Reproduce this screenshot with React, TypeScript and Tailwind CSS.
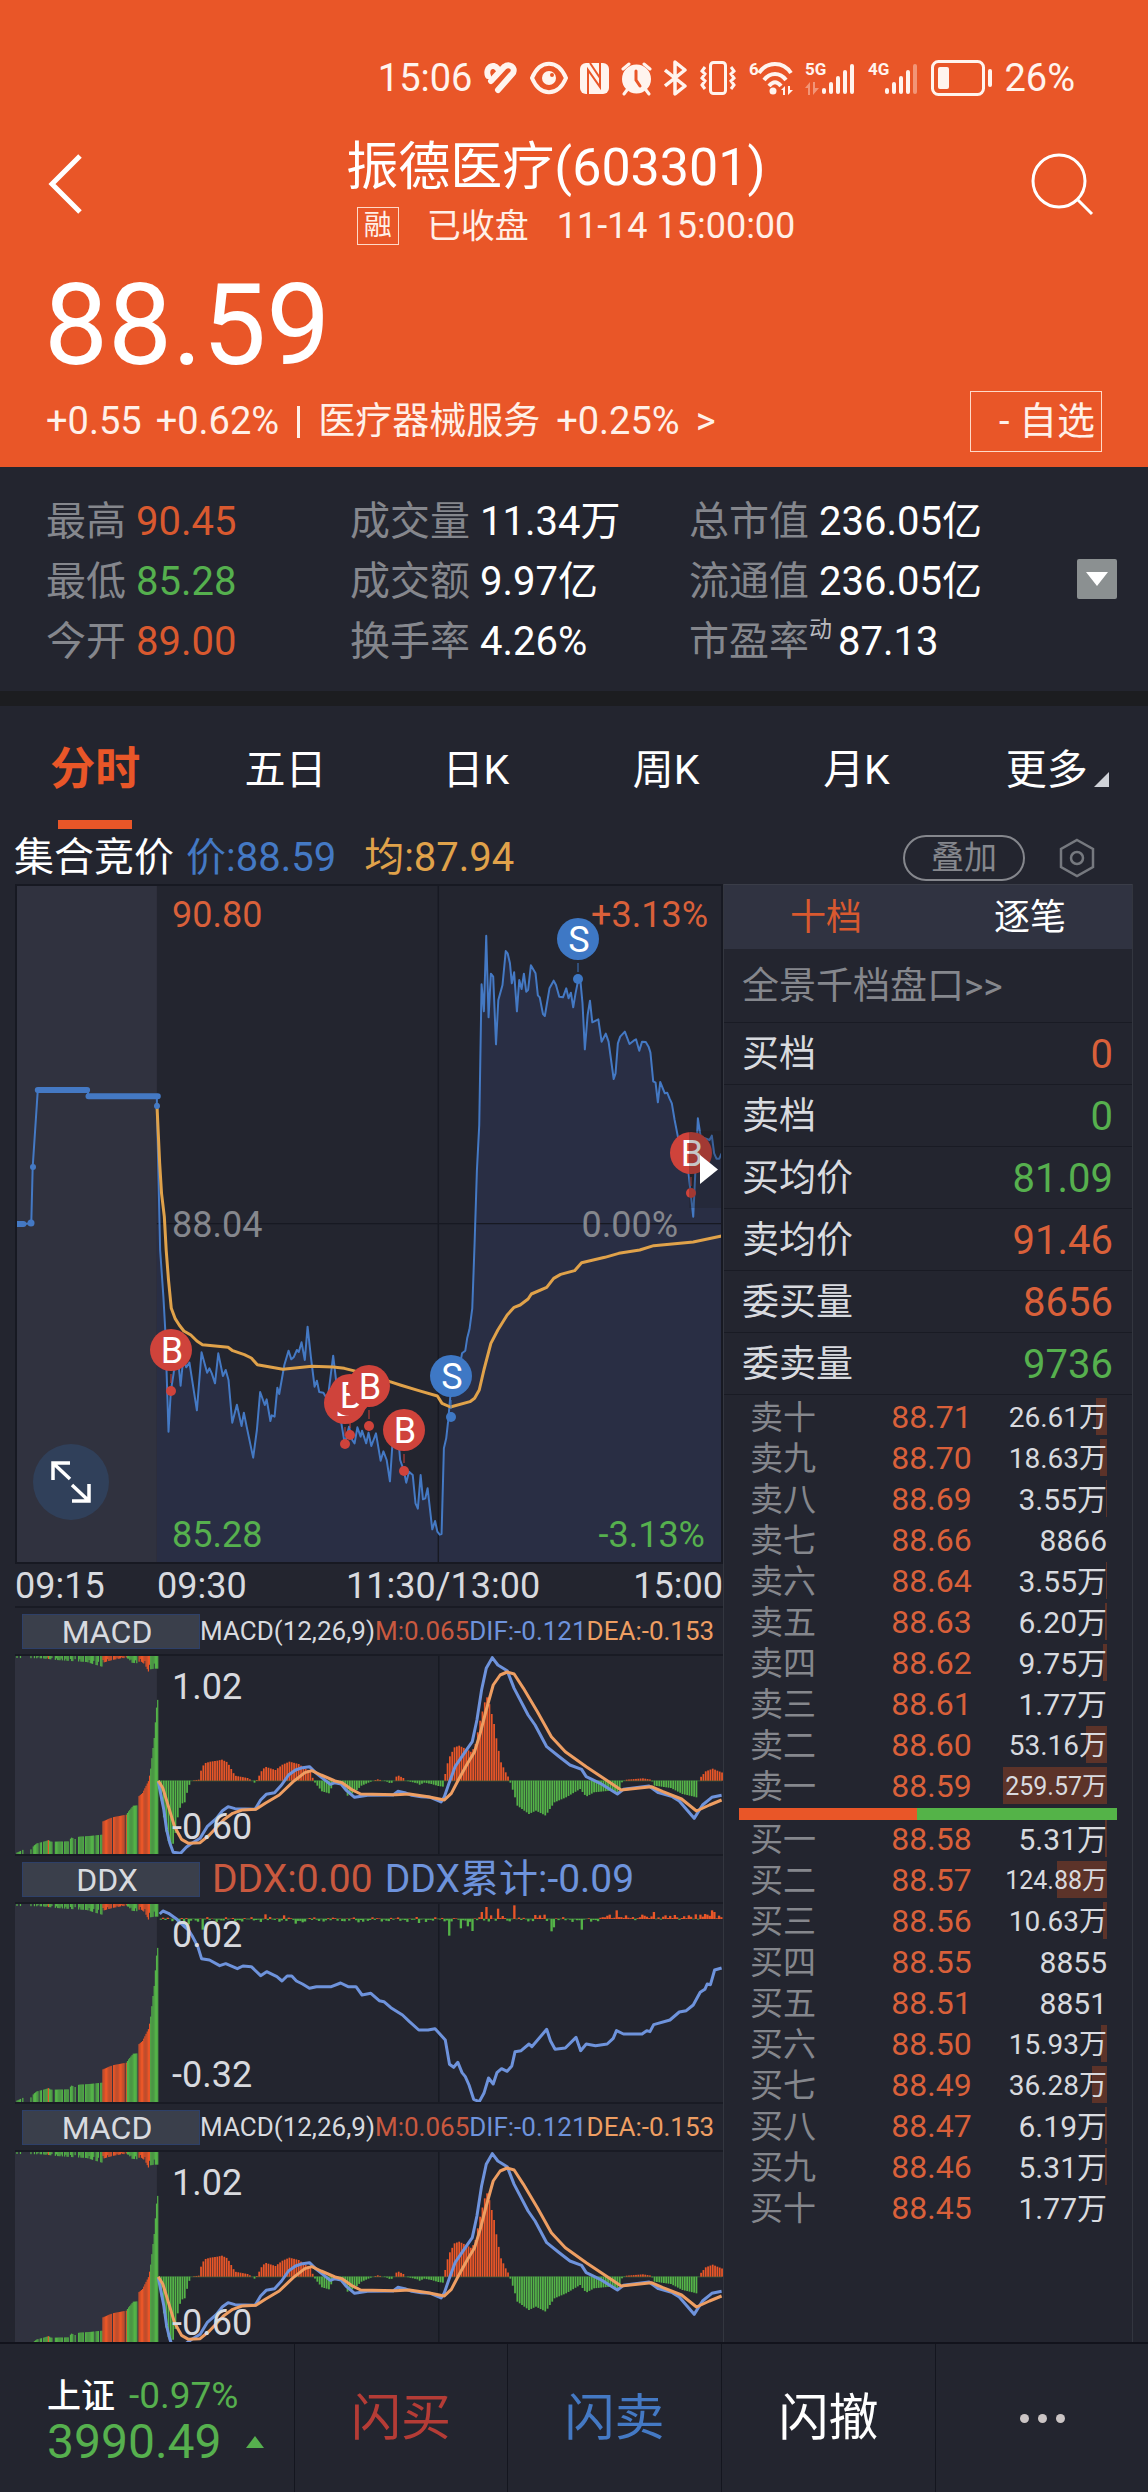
import { useState } from "react";
import type { ReactNode } from "react";
import clsx from "clsx";

type Point = [number, number];

const parse = (text: string): Point[] =>
  text
    .trim()
    .split(/\s+/)
    .map((pair) => pair.split(",").map(Number) as Point);

// linear interpolation between key points
const valueAt = (keys: Point[], x: number) => {
  for (let i = 1; i < keys.length; i++) {
    const [x0, y0] = keys[i - 1];
    const [x1, y1] = keys[i];
    if (x <= x1) return y0 + ((y1 - y0) * (x - x0)) / (x1 - x0 || 1);
  }
  return keys[keys.length - 1][1];
};

const RED = "#e95628";
const GREEN = "#54b348";

const AUCTION = "32,1062 50,1062 67,1060 70,892 81,660 189,660 189,679 337,679 337,708";

const PRICE = `337,708 344,1140 351,1280 355,1380 362,1685 367,1563 373,1510 380,1430 388,1547 394,1460 400,1492 407,1478
415,1550 423,1621 433,1447 445,1508 450,1495 455,1510 462,1540 469,1450 479,1518 485,1500 491,1530 499,1658 509,1604
519,1668 524,1628 530,1670 544,1763 552,1680 559,1566 569,1605 573,1588 581,1653 584,1636 590,1640 596,1553 600,1572
611,1485 620,1442 626,1468 631,1462 638,1440 642,1446 648,1417 655,1470 661,1370 668,1460 676,1550 681,1532 686,1566
695,1568 704,1590 716,1457 723,1540 733,1655 741,1722 750,1670 757,1710 762,1720 768,1672 775,1700 778,1682 787,1720
792,1688 798,1728 808,1690 818,1772 824,1744 831,1770 838,1834 843,1730 850,1680 857,1720 860,1770 868,1802 873,1838
879,1805 887,1815 893,1900 898,1916 904,1815 909,1888 914,1885 919,1855 929,1978 935,1953 940,1985 945,1994 949,1992
954,1735 959,1705 963,1655 969,1560 985,1510 993,1450 1000,1442 1004,1405 1009,1378 1015,1315 1020,1120 1025,900
1030,765 1035,343 1040,424 1045,197 1050,442 1055,311 1060,320 1066,523 1071,390 1080,345 1087,243 1091,250 1096,280
1100,340 1105,307 1111,424 1116,330 1121,357 1126,311 1131,365 1135,360 1141,286 1151,310 1156,376 1160,382 1167,432
1171,438 1181,355 1190,332 1195,345 1202,380 1210,382 1217,355 1222,385 1227,368 1232,412 1237,370 1243,328 1248,340
1252,400 1257,538 1263,435 1268,392 1273,457 1286,448 1293,515 1302,491 1308,515 1319,627 1323,610 1328,520 1333,500
1343,485 1353,522 1362,512 1367,508 1374,542 1380,515 1388,516 1394,530 1398,548 1404,634 1409,638 1414,697 1419,636
1429,670 1434,668 1439,685 1444,700 1450,750 1457,800 1480,910 1490,1040 1500,745 1506,800 1525,810 1530,797 1535,850
1540,866 1546,866 1551,850`;

const AVERAGE = `337,700 343,880 347,970 353,1040 357,1140 362,1230 368,1315 376,1345 385,1365 395,1383 410,1395 423,1413
435,1424 490,1432 500,1442 525,1454 540,1464 553,1484 608,1498 670,1489 716,1491 740,1495 768,1505 810,1520 838,1535
860,1545 900,1562 940,1578 950,1600 968,1611 1010,1595 1020,1585 1030,1560 1040,1500 1055,1420 1070,1380 1090,1335
1105,1312 1118,1305 1135,1287 1142,1272 1175,1252 1190,1225 1205,1213 1235,1202 1250,1178 1300,1162 1330,1150
1375,1140 1405,1127 1490,1116 1551,1098`;

const DIF = `340,545 345,580 352,630 358,690 365,730 372,757 388,760 400,742 412,730 430,715 445,680 465,655 478,632
490,620 505,626 548,628 560,600 572,583 590,578 605,555 620,525 635,510 650,503 665,500 680,520 710,553 720,548
733,552 745,572 762,592 790,586 845,585 855,574 870,578 885,586 905,590 925,592 948,606 955,590 965,550 978,500
1000,455 1015,425 1025,360 1035,270 1045,205 1058,173 1070,195 1090,212 1105,265 1135,345 1150,375 1175,440 1200,468
1225,495 1250,508 1260,530 1290,550 1327,582 1340,568 1395,558 1415,578 1445,590 1460,603 1492,655 1510,615 1530,592
1551,586`;

const DEA = `340,542 350,565 362,620 375,680 390,718 405,730 430,728 450,705 480,660 500,640 520,630 550,628 570,610
600,585 630,545 655,518 670,512 690,525 720,543 735,548 755,568 775,582 850,584 880,582 920,590 955,600 970,580
985,540 1005,490 1020,455 1032,400 1045,330 1060,255 1075,225 1090,216 1105,222 1125,265 1155,335 1185,410 1215,455
1260,500 1335,570 1400,560 1425,575 1465,597 1497,633 1525,615 1551,600`;

const MACD_KEYS = parse(`340,-15 345,-60 350,-110 357,-170 365,-200 372,-185 380,-110 387,-70 395,-65 402,-25 408,0
425,3 430,30 437,52 450,57 465,60 475,63 487,55 495,35 503,15 530,8 540,0 545,-6 552,5 558,25 568,42 590,32 605,48
620,57 640,50 655,35 665,30 672,0 680,-15 690,-32 705,-38 715,-8 725,-5 735,-12 745,-45 760,-35 775,-15 800,0 810,4
830,-3 838,-9 845,0 852,17 865,8 870,0 895,-8 897,-14 910,-6 925,-10 940,-16 950,-18 955,20 962,65 975,100 985,105
1000,95 1012,85 1020,110 1030,180 1040,235 1046,253 1055,200 1060,170 1067,110 1075,55 1085,25 1091,10 1096,-10
1103,-40 1110,-75 1135,-100 1150,-90 1171,-105 1180,-85 1190,-65 1215,-50 1245,-25 1258,-48 1275,-35 1310,-30
1325,-42 1335,-5 1345,3 1380,7 1398,3 1405,-15 1440,-22 1465,-40 1490,-48 1495,-50 1500,0 1504,10 1515,28 1530,36
1540,30 1551,24`);

const DDX_LINE = `343,192 350,183 362,190 380,208 395,228 405,240 413,258 425,290 433,326 450,330 472,347 485,341
510,356 522,348 540,350 560,377 573,365 595,380 606,393 617,378 627,378 637,393 650,402 665,415 680,410 712,410
732,399 748,410 765,410 778,435 797,430 815,452 825,455 840,473 865,495 880,515 900,540 920,540 935,536 957,570
966,643 975,652 984,637 993,668 1000,680 1008,705 1018,748 1030,755 1040,730 1050,684 1060,702 1068,668 1078,656
1090,664 1100,648 1107,605 1120,602 1137,582 1143,590 1175,538 1183,572 1193,598 1215,594 1238,562 1248,602 1260,582
1280,587 1305,582 1318,565 1325,542 1340,552 1380,552 1390,542 1397,545 1405,524 1440,510 1460,486 1475,482 1490,465
1505,427 1515,418 1520,402 1527,404 1536,360 1551,354`;

const DDX_SPIKES = parse(`393,-18 403,-16 433,-32 570,13 610,10 635,-14 650,-10 770,-10 900,-12 963,-50 990,-28 1003,-22
1015,-36 1033,20 1045,35 1055,10 1066,30 1076,8 1105,40 1150,11 1160,10 1170,12 1182,-37 1190,-25 1247,-32 1308,12
1323,25 1378,12 1403,20 1430,10 1450,11 1480,10 1495,13 1502,12 1512,14 1520,12 1530,25 1535,20 1545,9`);

const AUCTION_VOLUME = parse(`36,5 50,14 66,14 71,25 78,32 95,38 103,42 108,37 148,38 151,50 160,45 168,52 190,54 218,58
220,98 240,110 270,118 275,128 285,145 294,146 296,172 305,183 318,220 322,250 326,300 331,360 334,430 338,467`);

const AUCTION_UNMATCHED = parse(`36,6 90,7 120,12 150,15 185,18 205,27 218,32 220,20 240,12 262,6 275,8 281,20 292,22 300,15
310,25 318,48 322,40 330,38 338,38`);

const auctionColor = (x: number) =>
  (x > 218 && x < 272) || (x > 294 && x < 321) || x === 102.5 ? RED : GREEN;

const STATS = [
  [
    { label: "最高", value: "90.45", color: "text-[#d9592f]" },
    { label: "最低", value: "85.28", color: "text-[#55b04e]" },
    { label: "今开", value: "89.00", color: "text-[#d9592f]" },
  ],
  [
    { label: "成交量", value: "11.34万", color: "text-white" },
    { label: "成交额", value: "9.97亿", color: "text-white" },
    { label: "换手率", value: "4.26%", color: "text-white" },
  ],
  [
    { label: "总市值", value: "236.05亿", color: "text-white" },
    { label: "流通值", value: "236.05亿", color: "text-white" },
    { label: "市盈率", value: "87.13", color: "text-white", sup: "动" },
  ],
];

const TABS = ["分时", "五日", "日K", "周K", "月K", "更多"];

const SUMMARY = [
  { label: "买档", value: "0", up: true },
  { label: "卖档", value: "0", up: false },
  { label: "买均价", value: "81.09", up: false },
  { label: "卖均价", value: "91.46", up: true },
  { label: "委买量", value: "8656", up: true },
  { label: "委卖量", value: "9736", up: false },
];

type Level = { label: string; price: string; amount: string };

const ASKS: Level[] = [
  { label: "卖十", price: "88.71", amount: "26.61万" },
  { label: "卖九", price: "88.70", amount: "18.63万" },
  { label: "卖八", price: "88.69", amount: "3.55万" },
  { label: "卖七", price: "88.66", amount: "8866" },
  { label: "卖六", price: "88.64", amount: "3.55万" },
  { label: "卖五", price: "88.63", amount: "6.20万" },
  { label: "卖四", price: "88.62", amount: "9.75万" },
  { label: "卖三", price: "88.61", amount: "1.77万" },
  { label: "卖二", price: "88.60", amount: "53.16万" },
  { label: "卖一", price: "88.59", amount: "259.57万" },
];

const BIDS: Level[] = [
  { label: "买一", price: "88.58", amount: "5.31万" },
  { label: "买二", price: "88.57", amount: "124.88万" },
  { label: "买三", price: "88.56", amount: "10.63万" },
  { label: "买四", price: "88.55", amount: "8855" },
  { label: "买五", price: "88.51", amount: "8851" },
  { label: "买六", price: "88.50", amount: "15.93万" },
  { label: "买七", price: "88.49", amount: "36.28万" },
  { label: "买八", price: "88.47", amount: "6.19万" },
  { label: "买九", price: "88.46", amount: "5.31万" },
  { label: "买十", price: "88.45", amount: "1.77万" },
];

const SignalBars = ({ label, strength, data }: { label: string; strength: number; data?: boolean }) => (
  <svg width="51" height="36" viewBox="0 0 51 36" fill="#fff4ee" className="overflow-visible">
    <text x="0" y="15" fontSize="17" fontWeight="700">
      {label}
    </text>
    {data && <path d="M0 28l5-6v13H3v-7zM14 28l-6 7V22h2v6z" opacity="0.4" />}
    {[0, 1, 2, 3, 4].map((i) => (
      <rect
        key={i}
        x={17 + i * 7}
        y={28 - i * 6}
        width="4"
        height={6 + i * 6}
        rx="2"
        opacity={i < strength ? 1 : 0.4}
      />
    ))}
  </svg>
);

const StatusBar = () => (
  <div className="flex h-9 items-center justify-end gap-3 pr-[73px] text-[38px] leading-9 text-[#fff4ee]">
    <span>15:06</span>
    <svg width="34" height="36" viewBox="0 0 34 36" fill="none" stroke="#fff4ee" strokeWidth="6" strokeLinecap="round">
      <path d="M4 16C1 8 9 2 14 9M7 21L20 7M14 30L29 13M20 7c5-4 12 0 9 6" />
    </svg>
    <svg width="38" height="36" viewBox="0 0 38 36" fill="none" stroke="#fff4ee" strokeWidth="4">
      <path d="M2 18C10 -1 28 -1 36 18C28 37 10 37 2 18z" />
      <circle cx="19" cy="18" r="7" fill="#fff4ee" stroke="none" />
      <circle cx="22" cy="15" r="2" fill={RED} stroke="none" />
    </svg>
    <svg width="29" height="36" viewBox="0 0 29 36">
      <rect y="3" width="29" height="31" rx="6" fill="#fff4ee" />
      <path d="M8 34V10l12 17V3" fill="none" stroke={RED} strokeWidth="2" />
      <path d="M10 3l10 15" fill="none" stroke={RED} strokeWidth="2" />
    </svg>
    <svg width="31" height="36" viewBox="0 0 31 36" fill="none" stroke="#fff4ee" strokeWidth="3" strokeLinecap="round">
      <circle cx="15.500" cy="19" r="13" fill="#fff4ee" />
      <path d="M2 9l6-5M29 9l-6-5M6 30l-3 4M25 30l3 4" />
      <path d="M15 11v9l4 6" stroke={RED} />
    </svg>
    <svg width="23" height="36" viewBox="0 0 23 36" fill="none" stroke="#fff4ee" strokeWidth="3.500" strokeLinejoin="round">
      <path d="M1 10l20 16-10 8V2l10 8L1 26" />
    </svg>
    <svg width="38" height="36" viewBox="0 0 38 36" fill="none" stroke="#fff4ee" strokeWidth="3">
      <rect x="11.500" y="2.500" width="15" height="31" rx="3" />
      <path d="M6 7l-3 4 3 3-3 4 3 3-3 4 3 4M32 7l3 4-3 3 3 4-3 3 3 4-3 4" />
    </svg>
    <svg
      width="44"
      height="36"
      viewBox="0 0 44 36"
      fill="none"
      stroke="#fff4ee"
      strokeWidth="4"
      className="overflow-visible"
    >
      <text x="0" y="15" fontSize="17" fontWeight="700" fill="#fff4ee" stroke="none">
        6
      </text>
      <path d="M10 13c8-12 24-12 32 0M15 20c6-8 16-8 22 0M20 26c4-5 8-5 12 0" />
      <circle cx="24" cy="31" r="3.500" fill="#fff4ee" stroke="none" />
      <path d="M32 30l4-4v9h-2v-5zM44 30l-5 5v-9h2v4z" fill="#fff4ee" stroke="none" />
    </svg>
    <SignalBars label="5G" strength={5} data />
    <SignalBars label="4G" strength={4} />
    <svg width="61" height="36" viewBox="0 0 61 36" fill="none" stroke="#fff4ee">
      <rect x="1.500" y="1.500" width="51" height="33" rx="6" strokeWidth="3" />
      <rect x="7" y="7" width="11" height="22" rx="2" fill="#fff4ee" stroke="none" />
      <rect x="57" y="9" width="4" height="18" rx="2" fill="#fff4ee" stroke="none" />
    </svg>
    <span>26%</span>
  </div>
);

const Header = () => (
  <header className="shrink-0 bg-[#e95628] pt-15 pb-[15px] text-white">
    <StatusBar />
    <div className="mt-[42px] flex items-start justify-between pr-[54px] pl-[46px]">
      <button aria-label="返回" className="flex h-[92px] items-center">
        <svg width="40" height="60" viewBox="0 0 40 60" fill="none" stroke="#fff" strokeWidth="5">
          <path d="M34 2L6 30l28 28" />
        </svg>
      </button>
      <div className="flex flex-col items-center pl-9">
        <h1 className="pr-10 text-[52px] leading-[60px]">振德医疗(603301)</h1>
        <div className="mt-[9px] flex h-[38px] items-center text-[34px] leading-[38px] text-[#fff0e8]">
          <span className="mr-7 border border-[#ffd9c8] px-1.5 text-[28px] leading-9">融</span>
          <span className="mr-7">已收盘</span>
          <span className="text-4xl leading-[38px]">11-14 15:00:00</span>
        </div>
      </div>
      <button aria-label="搜索" className="flex h-[92px] items-center">
        <svg width="64" height="64" viewBox="0 0 64 64" fill="none" stroke="#fff" strokeWidth="3">
          <circle cx="29" cy="29" r="26" />
          <path d="M48 48l14 14" />
        </svg>
      </button>
    </div>
    <div className="mt-6 pl-[44px] text-[114px] leading-[112px]">88.59</div>
    <div className="mt-2.5 flex h-[61px] items-center justify-between px-[46px] text-[38px] text-[#fff0e8]">
      <div className="flex items-center gap-3.5">
        <span>+0.55</span>
        <span>+0.62%</span>
        <span className="mx-1 h-8 w-[3px] bg-[#fff0e8]" />
        <a href="#sector" className="flex items-center gap-4">
          <span className="text-[37px]">医疗器械服务</span>
          <span>+0.25%</span>
          <span>&gt;</span>
        </a>
      </div>
      <button className="h-full w-[132px] border border-[#ffd9c8] pr-1.5 text-right">- 自选</button>
    </div>
  </header>
);

const Stats = () => (
  <section className="relative grid shrink-0 grid-cols-[304fr_339fr_459fr] border-b-[15px] border-[#1c1d20] pt-[25px] pb-[19px] pl-[46px] text-[40px] leading-[60px]">
    {STATS.map((column, i) => (
      <dl key={i}>
        {column.map((item) => (
          <div key={item.label} className="flex">
            <dt className="text-[#85878d]">{item.label}</dt>
            <dd className={clsx("flex", item.color, item.sup ? "gap-1.5" : "pl-2.5")}>
              {item.sup && <span className="text-[23px] leading-9 text-[#b9bbc0]">{item.sup}</span>}
              {item.value}
            </dd>
          </div>
        ))}
      </dl>
    ))}
    <button
      aria-label="展开"
      className="absolute top-[92px] right-[31px] flex size-10 items-center justify-center rounded-xs bg-[#8b9091]"
    >
      <svg width="22" height="14" viewBox="0 0 22 14" fill="#fff">
        <path d="M0 0h22L11 14z" />
      </svg>
    </button>
  </section>
);

const PeriodTabs = () => {
  const [active, setActive] = useState("分时");
  return (
    <nav className="grid shrink-0 grid-cols-6 pr-1.5">
      {TABS.map((tab) => (
        <button
          key={tab}
          onClick={() => setActive(tab)}
          className={clsx(
            "relative h-[123px] pt-[38px] pb-[33px] leading-[52px]",
            tab === active ? "text-[45px] font-bold text-[#e95628]" : "text-[41px] text-white"
          )}
        >
          {tab}
          {tab === "更多" && (
            <svg className="absolute top-[66px] right-[33px]" width="15" height="15" viewBox="0 0 15 15" fill="#cfd2d8">
              <path d="M15 0v15H0z" />
            </svg>
          )}
          {tab === active && <span className="absolute bottom-0 left-1/2 h-[9px] w-[74px] -translate-x-1/2 bg-[#e95628]" />}
        </button>
      ))}
    </nav>
  );
};

const InfoRow = () => (
  <div className="flex h-[55px] shrink-0 items-center pt-0.5 pr-[52px] pl-[14px] text-[40px] leading-[53px]">
    <span className="text-white">集合竞价</span>
    <span className="pl-3 text-[#4479c4]">价:88.59</span>
    <span className="pl-7 text-[#e0a24a]">均:87.94</span>
    <button className="ml-auto h-[46px] w-[122px] rounded-full border-2 border-[#85878d] text-[33px] leading-[42px] text-[#85878d]">
      叠加
    </button>
    <button aria-label="设置" className="ml-[33px]">
      <svg width="38" height="40" viewBox="0 0 38 40" fill="none" stroke="#76797f" strokeWidth="2.500">
        <path d="M19 2l16 9v18l-16 9-16-9V11z" />
        <circle cx="19" cy="20" r="6" />
      </svg>
    </button>
  </div>
);

const Marker = ({ x, y, dotY, side }: { x: number; y: number; dotY: number; side: "B" | "S" }) => {
  const color = side === "B" ? "#cf433b" : "#3e78c5";
  return (
    <g>
      <path d={`M${x} ${y}V${dotY}`} stroke={color} strokeWidth="1" strokeDasharray="9 3" />
      <circle cx={x} cy={dotY} r="5" fill={color} />
      <circle cx={x} cy={y} r="21" fill={color} />
      <text x={x + 1} y={y + 13} textAnchor="middle" fontSize="36" fill="#fff">
        {side}
      </text>
    </g>
  );
};

const PriceChart = () => (
  <div className="relative">
    <svg viewBox="0 0 708 680" className="block w-full">
      <svg width="708" height="680" viewBox="32 42 1522 2040" preserveAspectRatio="none" fill="none">
        <path d="M32 42H337V2080H32z" fill="#30323f" />
        <path d={`M337,2080 L${PRICE} L1551,2080z`} fill="#292e44" />
        <path d="M942 42V2080" stroke="#171922" strokeWidth="3" />
        <path d="M337 1061H1554" stroke="#171922" strokeWidth="4" />
        <polyline points={PRICE} stroke="#4479c4" strokeWidth="2" strokeLinejoin="round" vectorEffect="non-scaling-stroke" />
        <polyline points={AUCTION} stroke="#4479c4" strokeWidth="2" vectorEffect="non-scaling-stroke" />
        <path
          d="M81 660H187M190 679H339M32 1062H50"
          stroke="#4479c4"
          strokeWidth="6"
          strokeLinecap="round"
          vectorEffect="non-scaling-stroke"
        />
        <polyline points={AVERAGE} stroke="#e0a24a" strokeWidth="3" strokeLinejoin="round" vectorEffect="non-scaling-stroke" />
      </svg>
      <g fill="#4479c4">
        <circle cx="16" cy="339" r="3.500" />
        <circle cx="18" cy="283" r="3" />
        <circle cx="142" cy="222" r="3" />
      </g>
      <g fontSize="36">
        <g fill="#d9603a">
          <text x="157" y="43">90.80</text>
          <text x="693" y="43" textAnchor="end">+3.13%</text>
        </g>
        <g fill="#85878d">
          <text x="157" y="353">88.04</text>
          <text x="663" y="353" textAnchor="end">0.00%</text>
        </g>
        <g fill="#56b04e">
          <text x="157" y="663">85.28</text>
          <text x="690" y="663" textAnchor="end">-3.13%</text>
        </g>
      </g>
      <Marker x={156} y={466} dotY={507} side="B" />
      <Marker x={330} y={519} dotY={560} side="B" />
      <Marker x={335} y={511} dotY={551} side="B" />
      <Marker x={354} y={502} dotY={542} side="B" />
      <Marker x={389} y={546} dotY={587} side="B" />
      <Marker x={436} y={492} dotY={533} side="S" />
      <Marker x={563} y={55} dotY={95} side="S" />
      <Marker x={676} y={269} dotY={309} side="B" />
      <path d="M674 247H708V324H674z" fill="#1a1a1a" fillOpacity="0.25" />
      <path d="M685 271L703 285.500L685 300z" fill="#fff" />
      <path d="M1 680V1H707V679H1" fill="none" stroke="#171922" strokeWidth="2" />
    </svg>
    <button
      aria-label="全屏"
      className="absolute bottom-[44px] left-[18px] flex size-[76px] items-center justify-center rounded-full bg-[#30405a]"
    >
      <svg width="44" height="46" viewBox="0 0 44 46" fill="none" stroke="#fff" strokeWidth="3.500">
        <path d="M21 4H4v17M4 4l17 16M23 42h17V25M40 42L23 26" />
      </svg>
    </button>
  </div>
);

// opening auction block shared by every indicator, drawn in a 594 high plot
const AuctionBars = ({ top }: { top: number }) => {
  const bars = [];
  for (let i = 0; i < 122; i++) {
    const x = 35 + i * 2.5;
    const sparse = x < 218 ? i % 9 === 4 || i % 13 === 6 : i % 11 === 5 && x < 320;
    if (sparse || (x > 52 && x < 64) || (x > 160 && x < 166)) continue;
    const fill = auctionColor(x);
    const h = valueAt(AUCTION_VOLUME, x);
    bars.push(<rect key={`v${i}`} x={x} y={top + 594 - h} width="2.600" height={h} fill={fill} />);
    const depth = valueAt(AUCTION_UNMATCHED, x) * (i % 4 === 2 ? 0.6 : 1);
    if (x > 75 || i % 3 === 0) {
      bars.push(<rect key={`u${i}`} x={x} y={top} width="2.600" height={depth} fill={fill} />);
    }
  }
  return (
    <>
      <rect x="32" y={top} width="305" height="594" fill="#30323f" />
      {bars}
    </>
  );
};

const MacdChart = () => {
  const bars = [];
  for (let x = 340; x < 1552; x += 5) {
    const h = valueAt(MACD_KEYS, x);
    if (Math.abs(h) < 1) continue;
    bars.push(
      <rect key={x} x={x} y={h > 0 ? 542 - h : 542} width="3.800" height={Math.abs(h)} fill={h > 0 ? RED : GREEN} />
    );
  }
  return (
    <svg viewBox="0 0 708 198" className="block w-full">
      <svg width="708" height="198" viewBox="32 168 1522 594" preserveAspectRatio="none" fill="none">
        <AuctionBars top={168} />
        <path d="M943 168V762" stroke="#171922" strokeWidth="3" />
        <rect x="340" y="541" width="1212" height="3" fill={GREEN} opacity="0.4" />
        {bars}
        <polyline points={DIF} stroke="#6e93dc" strokeWidth="3" strokeLinejoin="round" vectorEffect="non-scaling-stroke" />
        <polyline points={DEA} stroke="#ee9e62" strokeWidth="3" strokeLinejoin="round" vectorEffect="non-scaling-stroke" />
      </svg>
      <g fontSize="36" fill="#d8dadf">
        <text x="157" y="43">1.02</text>
        <text x="157" y="183">-0.60</text>
      </g>
    </svg>
  );
};

const DdxChart = () => {
  const bars = [];
  for (let x = 343, i = 0; x < 1552; x += 5, i++) {
    const spike = DDX_SPIKES.find(([sx]) => Math.abs(sx - x) <= 2.5);
    const noise = Math.sin(i * 2.3) * 4 + Math.sin(i * 0.7) * 3 + (x > 1290 ? 3 : -2);
    const h = spike ? spike[1] : noise;
    bars.push(
      <rect key={x} x={x} y={h > 0 ? 206 - h : 206} width="5" height={Math.abs(h) + 1} fill={h > 0 ? RED : GREEN} />
    );
  }
  return (
    <svg viewBox="0 0 708 198" className="block w-full">
      <svg width="708" height="198" viewBox="32 162 1522 594" preserveAspectRatio="none" fill="none">
        <AuctionBars top={162} />
        <path d="M943 162V756" stroke="#171922" strokeWidth="3" />
        {bars}
        <polyline points={DDX_LINE} stroke="#6e93dc" strokeWidth="3" strokeLinejoin="round" vectorEffect="non-scaling-stroke" />
      </svg>
      <g fontSize="36" fill="#d8dadf">
        <text x="157" y="43">0.02</text>
        <text x="157" y="183">-0.32</text>
      </g>
    </svg>
  );
};

const IndicatorHeader = ({ name, children }: { name: string; children: ReactNode }) => (
  <div className="flex h-[50px] items-center border-y-2 border-[#191b24] pl-[7px] whitespace-nowrap">
    <button className="h-[35px] w-[178px] shrink-0 border border-[#2e4068] bg-[#3a3f4b] pr-2 text-[32px] leading-[34px] text-[#d8dadf]">
      {name}
    </button>
    {children}
  </div>
);

const MacdPanel = () => (
  <>
    <IndicatorHeader name="MACD">
      <div className="flex text-[26px] text-[#d8dadf]">
        <span>MACD(12,26,9)</span>
        <span className="text-[#c9593f]">M:0.065</span>
        <span className="text-[#6e93dc]">DIF:-0.121</span>
        <span className="text-[#ee9e62]">DEA:-0.153</span>
      </div>
    </IndicatorHeader>
    <MacdChart />
  </>
);

const Charts = () => (
  <div className="min-w-0">
    <PriceChart />
    <div className="grid h-[42px] grid-cols-[142fr_189fr_377fr] text-4xl leading-[44px] text-[#d8dadf]">
      <span>09:15</span>
      <span>09:30</span>
      <span className="flex justify-between">
        <span>11:30/13:00</span>
        <span>15:00</span>
      </span>
    </div>
    <MacdPanel />
    <IndicatorHeader name="DDX">
      <div className="flex gap-3 pl-3 text-[39px]">
        <span className="text-[#c9593f]">DDX:0.00</span>
        <span className="text-[#6e93dc]">DDX累计:-0.09</span>
      </div>
    </IndicatorHeader>
    <DdxChart />
    <MacdPanel />
  </div>
);

const amountSize = (size: number) => {
  if (size >= 100) return "text-[25px]";
  return size >= 10 ? "text-[28px]" : "text-[30px]";
};

const DepthTable = ({ levels, caption }: { levels: Level[]; caption: string }) => (
  <table aria-label={caption} className="w-full table-fixed">
    <tbody>
      {levels.map(({ label, price, amount }) => {
        const size = amount.endsWith("万") ? parseFloat(amount) : 0;
        return (
          <tr key={label} className="h-[41px] align-top leading-[39px]">
            <th scope="row" className="w-[41%] pl-[26px] text-left text-[33px] font-normal text-[#85878d]">
              {label}
            </th>
            <td className="text-[32px] text-[#d9603a]">{price}</td>
            <td className="w-[33%] pr-[25px] text-[#d8dadf]">
              <div className="relative ml-auto flex h-[37px] w-[104px] justify-end">
                {size > 2 && (
                  <span
                    className="absolute inset-y-0 right-0 bg-[#5c3329]"
                    style={{ width: `${(size / 259.57) * 100}%` }}
                  />
                )}
                <span className={clsx("relative", amountSize(size))}>{amount}</span>
              </div>
            </td>
          </tr>
        );
      })}
    </tbody>
  </table>
);

const OrderBook = () => {
  const [view, setView] = useState("十档");
  return (
    <aside className="min-w-0 border-x border-[#33363f]">
      <div className="grid h-[65px] grid-cols-2 border-t border-[#3a3d48] bg-[#303341] pt-0.5 text-4xl">
        {["十档", "逐笔"].map((name) => (
          <button
            key={name}
            onClick={() => setView(name)}
            className={name === view ? "text-[#d9592f]" : "text-white"}
          >
            {name}
          </button>
        ))}
      </div>
      <a href="#depth" className="block h-[74px] border-b border-[#191b24] pl-[18px] text-[37px] leading-[76px] text-[#85878d]">
        全景千档盘口&gt;&gt;
      </a>
      <dl>
        {SUMMARY.map((row) => (
          <div
            key={row.label}
            className="flex h-[62px] items-center justify-between border-b border-[#191b24] pt-[3px] pr-[19px] pl-[18px]"
          >
            <dt className="text-[37px] text-[#d8dadf]">{row.label}</dt>
            <dd className={clsx("text-[40px]", row.up ? "text-[#d9603a]" : "text-[#56b04e]")}>{row.value}</dd>
          </div>
        ))}
      </dl>
      <div className="pt-[3px]">
        <DepthTable levels={ASKS} caption="卖盘" />
        <div className="mx-[15px] flex h-3">
          <span className="w-[47%] bg-[#e95628]" />
          <span className="flex-1 bg-[#54b348]" />
        </div>
        <DepthTable levels={BIDS} caption="买盘" />
      </div>
    </aside>
  );
};

const BottomBar = () => (
  <footer className="grid h-[150px] shrink-0 grid-cols-[295fr_213fr_214fr_214fr_212fr] divide-x divide-[#14161f] border-t-2 border-[#12131c] bg-[#23252f] text-[50px]">
    <a href="#index" className="flex flex-col pt-8 pl-[47px] text-[#56b04e]">
      <span className="flex items-center gap-3.5 leading-10">
        <span className="text-[34px] font-medium text-white">上证</span>
        <span className="text-[37px] leading-10">-0.97%</span>
      </span>
      <span className="flex items-center gap-6 text-[48px] leading-[52px]">
        3990.49
        <svg width="18" height="12" viewBox="0 0 18 12" fill="#56b04e">
          <path d="M9 0l9 12H0z" />
        </svg>
      </span>
    </a>
    <button className="text-[#b53c36]">闪买</button>
    <button className="text-[#4479c4]">闪卖</button>
    <button className="text-white">闪撤</button>
    <button aria-label="更多操作" className="flex items-center justify-center gap-[9px]">
      <span className="size-[9px] rounded-full bg-[#cbc5c5]" />
      <span className="size-[9px] rounded-full bg-[#cbc5c5]" />
      <span className="size-[9px] rounded-full bg-[#cbc5c5]" />
    </button>
  </footer>
);

const App = () => {
  return (
    <main className="flex h-screen flex-col overflow-hidden bg-[#23252f] font-[Roboto,'Noto_Sans_CJK_SC',sans-serif]">
      <Header />
      <Stats />
      <PeriodTabs />
      <InfoRow />
      <section className="grid min-h-0 flex-1 grid-cols-[708fr_410fr] overflow-hidden px-[15px]">
        <Charts />
        <OrderBook />
      </section>
      <BottomBar />
    </main>
  );
};

export default App;
